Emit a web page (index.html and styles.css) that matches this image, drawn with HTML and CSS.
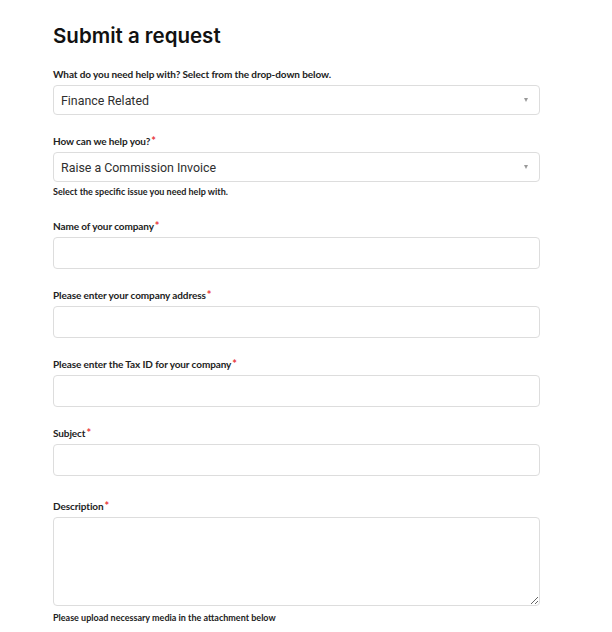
FILE: index.html
```html
<!DOCTYPE html>
<html lang="en">
<head>
    <meta charset="UTF-8">
    <meta name="viewport" content="width=device-width, initial-scale=1.0">
    <title>Submit a request</title>
    <link rel="stylesheet" href="styles.css">
</head>
<body>
    <div class="request-page">
        <h1>Submit a request</h1>
        <form id="requestForm">
            <div class="form-group">
                <label for="ticketForm">What do you need help with? Select from the drop-down below.</label>
                <div class="select-box" id="ticketForm">
                    <span>Finance Related</span>
                    <i class="caret"></i>
                </div>
            </div>
            <div class="form-group with-hint">
                <label for="issueType">How can we help you?<em>*</em></label>
                <div class="select-box" id="issueType">
                    <span>Raise a Commission Invoice</span>
                    <i class="caret"></i>
                </div>
                <p class="hint">Select the specific issue you need help with.</p>
            </div>
            <div class="form-group">
                <label for="companyName">Name of your company<em>*</em></label>
                <input type="text" id="companyName" name="companyName">
            </div>
            <div class="form-group">
                <label for="companyAddress">Please enter your company address<em>*</em></label>
                <input type="text" id="companyAddress" name="companyAddress">
            </div>
            <div class="form-group">
                <label for="taxId">Please enter the Tax ID for your company<em>*</em></label>
                <input type="text" id="taxId" name="taxId">
            </div>
            <div class="form-group">
                <label for="subject">Subject<em>*</em></label>
                <input type="text" id="subject" name="subject">
            </div>
            <div class="form-group desc-group">
                <label for="description">Description<em>*</em></label>
                <textarea id="description" name="description"></textarea>
                <p class="hint">Please upload necessary media in the attachment below</p>
            </div>
        </form>
    </div>
</body>
</html>
```

FILE: styles.css
```css
/* Reset */
* {
    margin: 0;
    padding: 0;
    box-sizing: border-box;
}

body {
    font-family: Lato, "Open Sans", sans-serif;
    background: #fff;
    color: #1a1a1a;
}

.request-page {
    width: 540px;
    padding: 23px 0 0 53px;
}

.request-page h1 {
    font-family: Inter, "Liberation Sans", sans-serif;
    font-size: 20.5px;
    font-weight: 600;
    line-height: 26px;
    color: #111;
    margin-bottom: 18px;
}

.form-group {
    margin-bottom: 19px;
}

.form-group.with-hint {
    margin-bottom: 20px;
}

.form-group label {
    display: block;
    font-size: 10px;
    font-weight: 700;
    line-height: 14px;
    letter-spacing: -0.1px;
    color: #222;
    margin-bottom: 4px;
}

.form-group label em {
    font-style: normal;
    color: #e8383d;
    font-size: 11px;
    line-height: 0;
    margin-left: 1px;
}

.select-box {
    display: flex;
    align-items: center;
    justify-content: space-between;
    height: 30px;
    padding: 0 11px 0 7px;
    border: 1px solid #ddd;
    border-radius: 4px;
    font-family: Roboto, "Open Sans", sans-serif;
    font-size: 12.4px;
    font-weight: 400;
    color: #2f2f2f;
}

.caret {
    width: 0;
    height: 0;
    border-left: 2.5px solid transparent;
    border-right: 2.5px solid transparent;
    border-top: 4px solid #999;
}

.form-group input,
.form-group textarea {
    display: block;
    width: 100%;
    height: 32px;
    border: 1px solid #ddd;
    border-radius: 4px;
    font-size: 13px;
    outline: none;
}

.form-group textarea {
    height: 89px;
    resize: vertical;
}

.hint {
    font-size: 9px;
    font-weight: 700;
    line-height: 14px;
    color: #222;
    margin-top: 3px;
}

.desc-group {
    margin-top: 23px;
}

.desc-group .hint {
    margin-top: 5px;
}
```
